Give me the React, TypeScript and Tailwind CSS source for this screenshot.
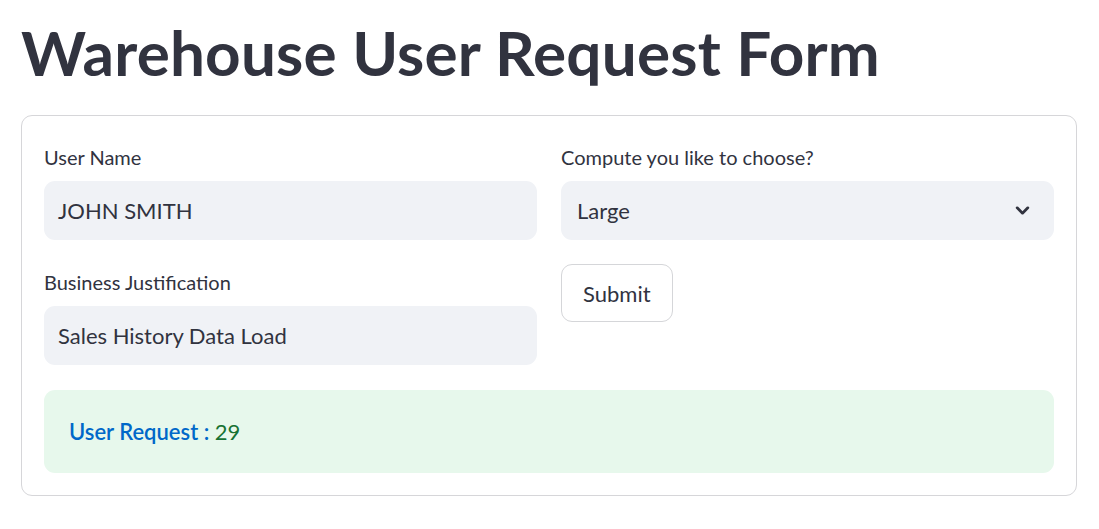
const ChevronDown = ({ className }: { className?: string }) => (
  <svg className={className} viewBox="0 0 16 16" fill="none" stroke="currentColor">
    <path d="M3 5.5l5 5 5-5" strokeWidth={2.6} strokeLinecap="round" strokeLinejoin="round" />
  </svg>
)

const Label = ({ children }: { children: React.ReactNode }) => (
  <div className="h-[34px] mb-[9px] pt-[4px] flex items-center text-[20px] text-[#31333f]">
    {children}
  </div>
)

const TextField = ({ label, value }: { label: string; value: string }) => (
  <div>
    <Label>{label}</Label>
    <div className="h-[59px] rounded-[11px] bg-[#f0f2f6] flex items-center px-[14px] text-[22px] text-[#31333f]">
      {value}
    </div>
  </div>
)

export default function App() {
  return (
    <div
      className="min-h-screen bg-white text-[#31333f]"
      style={{ fontFamily: '"Source Sans Pro", Lato, "Noto Sans", sans-serif' }}
    >
      <h1 className="pl-[21px] pt-[15px] pb-[26px] text-[62px] leading-[1.2] font-bold tracking-[0.2px]">
        Warehouse User Request Form
      </h1>

      <div className="ml-[21px] w-[1056px] rounded-[11px] border border-[#d6d6d9] p-[22px]">
        <div className="grid grid-cols-2 gap-x-[24px]">
          {/* Left column */}
          <div className="flex flex-col gap-[23px]">
            <TextField label="User Name" value="JOHN SMITH" />
            <TextField label="Business Justification" value="Sales History Data Load" />
          </div>

          {/* Right column */}
          <div className="flex flex-col gap-[24px]">
            <div>
              <Label>Compute you like to choose?</Label>
              <div className="h-[59px] rounded-[11px] bg-[#f0f2f6] flex items-center justify-between pl-[16px] pr-[23px] text-[22px] text-[#31333f]">
                <span>Large</span>
                <ChevronDown className="w-[17px] h-[17px] text-[#31333f]" />
              </div>
            </div>
            <div>
              <button className="h-[58px] px-[21px] rounded-[11px] border border-[#d5d6d9] bg-white text-[22px] text-[#31333f]">
                Submit
              </button>
            </div>
          </div>
        </div>

        {/* Result */}
        <div className="mt-[25px] h-[83px] rounded-[11px] bg-[#e7f8ec] flex items-center px-[25px] text-[22px]">
          <span className="text-[#0068c9] font-semibold">User Request</span>
          <span className="text-[#0068c9] font-semibold">&nbsp;:&nbsp;</span>
          <span className="text-[#177233]">29</span>
        </div>
      </div>
    </div>
  )
}
